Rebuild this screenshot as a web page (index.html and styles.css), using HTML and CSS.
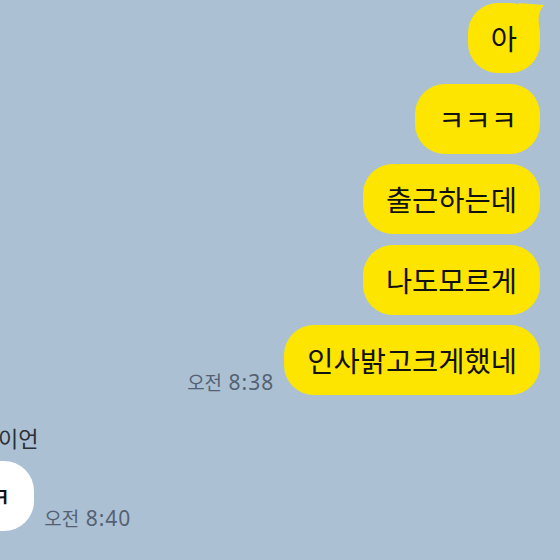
FILE: index.html
```html
<!DOCTYPE html>
<html lang="ko">
<head>
    <meta charset="UTF-8">
    <meta name="viewport" content="width=device-width, initial-scale=1.0">
    <link rel="stylesheet" href="styles.css">
    <title>채팅</title>
</head>
<body>
    <div class="chat">
        <div class="sent">
            <div class="msg">
                <p class="bubble me tail">아</p>
            </div>
            <div class="msg">
                <p class="bubble me">ㅋㅋㅋ</p>
            </div>
            <div class="msg">
                <p class="bubble me">출근하는데</p>
            </div>
            <div class="msg">
                <p class="bubble me">나도모르게</p>
            </div>
            <div class="msg">
                <span class="time"><span class="ampm">오전</span> 8:38</span>
                <p class="bubble me">인사밝고크게했네</p>
            </div>
        </div>

        <div class="received">
            <div class="name">이언</div>
            <div class="msg">
                <p class="bubble you">ㅋ</p>
                <span class="time"><span class="ampm">오전</span> 8:40</span>
            </div>
        </div>
    </div>
</body>
</html>
```

FILE: styles.css
```css
body {
    margin: 0;
    background-color: #abc1d3;
    font-family: "Noto Sans CJK KR", sans-serif;
}

.chat {
    width: 560px;
    height: 560px;
    overflow: hidden;
    padding-top: 3px;
    box-sizing: border-box;
}

.sent {
    display: flex;
    flex-direction: column;
    align-items: flex-end;
    gap: 10.5px;
    padding-right: 20px;
}

.msg {
    display: flex;
    align-items: flex-end;
    gap: 10px;
}

.bubble {
    margin: 0;
    padding: 17px 23px;
    font-size: 28.5px;
    line-height: 36px;
    color: #111;
    border-radius: 30px;
    white-space: nowrap;
}

.me {
    background-color: #fee500;
}

.you {
    background-color: #fff;
}

/* little tail on the first bubble of a group */
.tail {
    position: relative;
}

.tail::after {
    content: "";
    position: absolute;
    top: 0;
    right: -4px;
    width: 26px;
    height: 24px;
    background-color: #fee500;
    clip-path: path('M0 0 L26 2 Q19 9 21 23 Z');
}

.time {
    font-family: "Noto Sans", "Noto Sans CJK KR", sans-serif;
    font-size: 21px;
    line-height: 24px;
    letter-spacing: 1px;
    color: #556173;
    white-space: nowrap;
    padding-bottom: 1px;
}

.ampm {
    font-family: "Noto Sans CJK KR", sans-serif;
    font-size: 19px;
    letter-spacing: 0;
}

.received {
    margin-top: 30px;
}

.name {
    margin-left: -2px;
    font-size: 22px;
    line-height: 24px;
    color: #2a3038;
    margin-bottom: 12px;
}

.received .msg {
    margin-left: -38px;
}
```
